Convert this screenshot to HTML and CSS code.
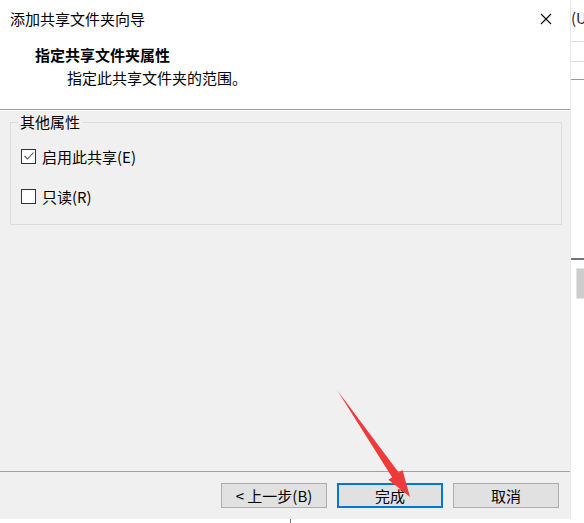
FILE: index.html
```html
<!DOCTYPE html>
<html lang="zh-CN">

<head>
    <meta charset="UTF-8">
    <title>添加共享文件夹向导</title>
    <link rel="stylesheet" href="styles.css">
</head>

<body>
    <div class="screen">
        <div class="row">
            <div class="dialog">
                <div class="titlebar">
                    <span class="title">添加共享文件夹向导</span>
                    <button class="close" aria-label="关闭">
                        <svg width="12" height="12" viewBox="0 0 12 12">
                            <path d="M1 1 L11 11 M11 1 L1 11" stroke="#000" stroke-width="1.1" fill="none" />
                        </svg>
                    </button>
                </div>

                <div class="header">
                    <h1>指定共享文件夹属性</h1>
                    <p>指定此共享文件夹的范围。</p>
                </div>

                <div class="content">
                    <fieldset class="group">
                        <legend>其他属性</legend>
                        <label class="check">
                            <span class="box">
                                <svg width="12" height="12" viewBox="0 0 12 12">
                                    <polyline points="1.5,6 4.5,9 10.5,2.5" stroke="#555" stroke-width="1.1" fill="none" />
                                </svg>
                            </span>
                            启用此共享(E)
                        </label>
                        <label class="check">
                            <span class="box"></span>
                            只读(R)
                        </label>
                    </fieldset>
                </div>

                <div class="footer">
                    <button class="btn">&lt; 上一步(B)</button>
                    <button class="btn default">完成</button>
                    <button class="btn">取消</button>
                </div>
            </div>

            <div class="side">
                <div class="side-text">(U</div>
                <div class="side-line first"></div>
                <div class="side-line"></div>
                <div class="side-line dark"></div>
                <div class="side-line darker"></div>
                <div class="side-thumb"></div>
            </div>
        </div>

        <div class="bottom">
            <div class="tick"></div>
        </div>

        <!-- red annotation arrow drawn over the dialog -->
        <svg class="arrow" width="584" height="523" viewBox="0 0 584 523">
            <polygon points="337,390 398.7,472.6 402.5,470 410,497 388.5,479.8 392.1,477.2" fill="#ef3a3a" />
        </svg>
    </div>
</body>

</html>
```

FILE: styles.css
```css
body {
    margin: 0;
    background-color: #fff;
    font-family: "Noto Sans CJK SC", "Microsoft YaHei", sans-serif;
    font-size: 15px;
    color: #000;
}

.screen {
    position: relative;
    width: 584px;
    height: 523px;
    overflow: hidden;
}

.row {
    display: flex;
    height: 519px;
}

.dialog {
    flex: none;
    width: 570px;
    height: 519px;
    display: flex;
    flex-direction: column;
    background-color: #f0f0f0;
}

.titlebar {
    height: 38px;
    display: flex;
    align-items: center;
    justify-content: space-between;
    padding-left: 10px;
    background-color: #fff;
}

.title {
    line-height: 20px;
}

.close {
    width: 48px;
    height: 38px;
    border: none;
    background: none;
    padding: 0;
    display: flex;
    align-items: center;
    justify-content: center;
}

.header {
    height: 71px;
    padding-left: 35px;
    background-color: #fff;
    border-bottom: 1px solid #a0a0a0;
}

.header h1 {
    margin: 7px 0 0;
    font-size: 15px;
    font-weight: bold;
    line-height: 20px;
}

.header p {
    margin: 3px 0 0;
    padding-left: 32px;
    line-height: 20px;
}

.content {
    flex: 1;
    padding: 2px 8px 0 10px;
    border-top: 1px solid #fff;
}

.group {
    margin: 0;
    padding: 0 0 18px 7px;
    border: 1px solid #dcdcdc;
    display: flex;
    flex-direction: column;
    gap: 20px;
}

.group legend {
    padding: 0 2px;
    line-height: 18px;
}

.check {
    display: flex;
    align-items: center;
    gap: 6px;
    height: 20px;
    margin-left: 3px;
}

.check:first-of-type {
    margin-top: 15px;
}

.box {
    width: 13px;
    height: 13px;
    border: 1px solid #333;
    background-color: #fff;
    display: flex;
    align-items: center;
    justify-content: center;
}

.footer {
    height: 36px;
    display: flex;
    justify-content: flex-end;
    gap: 10px;
    padding: 11px 11px 0 0;
    border-top: 1px solid #a0a0a0;
}

.btn {
    width: 106px;
    height: 25px;
    padding: 0;
    font-family: inherit;
    font-size: 15px;
    line-height: 20px;
    color: #000;
    background-color: #e1e1e1;
    border: 1px solid #adadad;
}

.btn.default {
    border: 2px solid #0078d7;
}

.side {
    flex: none;
    width: 13px;
    background-color: #fff;
    border-left: 1px solid #e8e8e8;
    overflow: hidden;
}

.side-text {
    margin-top: 8px;
    line-height: 20px;
    white-space: nowrap;
    color: #1b1b2e;
}

.side-line {
    height: 1px;
    margin-top: 19px;
    background-color: #dcdcdc;
}

.side-line.first {
    margin-top: 13px;
}

.side-line.dark {
    margin-top: 17px;
    background-color: #9a9a9a;
}

.side-line.darker {
    height: 2px;
    margin-top: 178px;
    background-color: #6f7680;
}

.side-thumb {
    width: 10px;
    height: 29px;
    margin: 8px 0 0 5px;
    background-color: #cdcdcd;
    border: 1px solid #e4e4e4;
}

.bottom {
    height: 4px;
    background-color: #fff;
}

.tick {
    width: 1px;
    height: 4px;
    margin-left: 290px;
    background-color: #777;
}

.arrow {
    position: absolute;
    left: 0;
    top: 0;
    pointer-events: none;
}
```
